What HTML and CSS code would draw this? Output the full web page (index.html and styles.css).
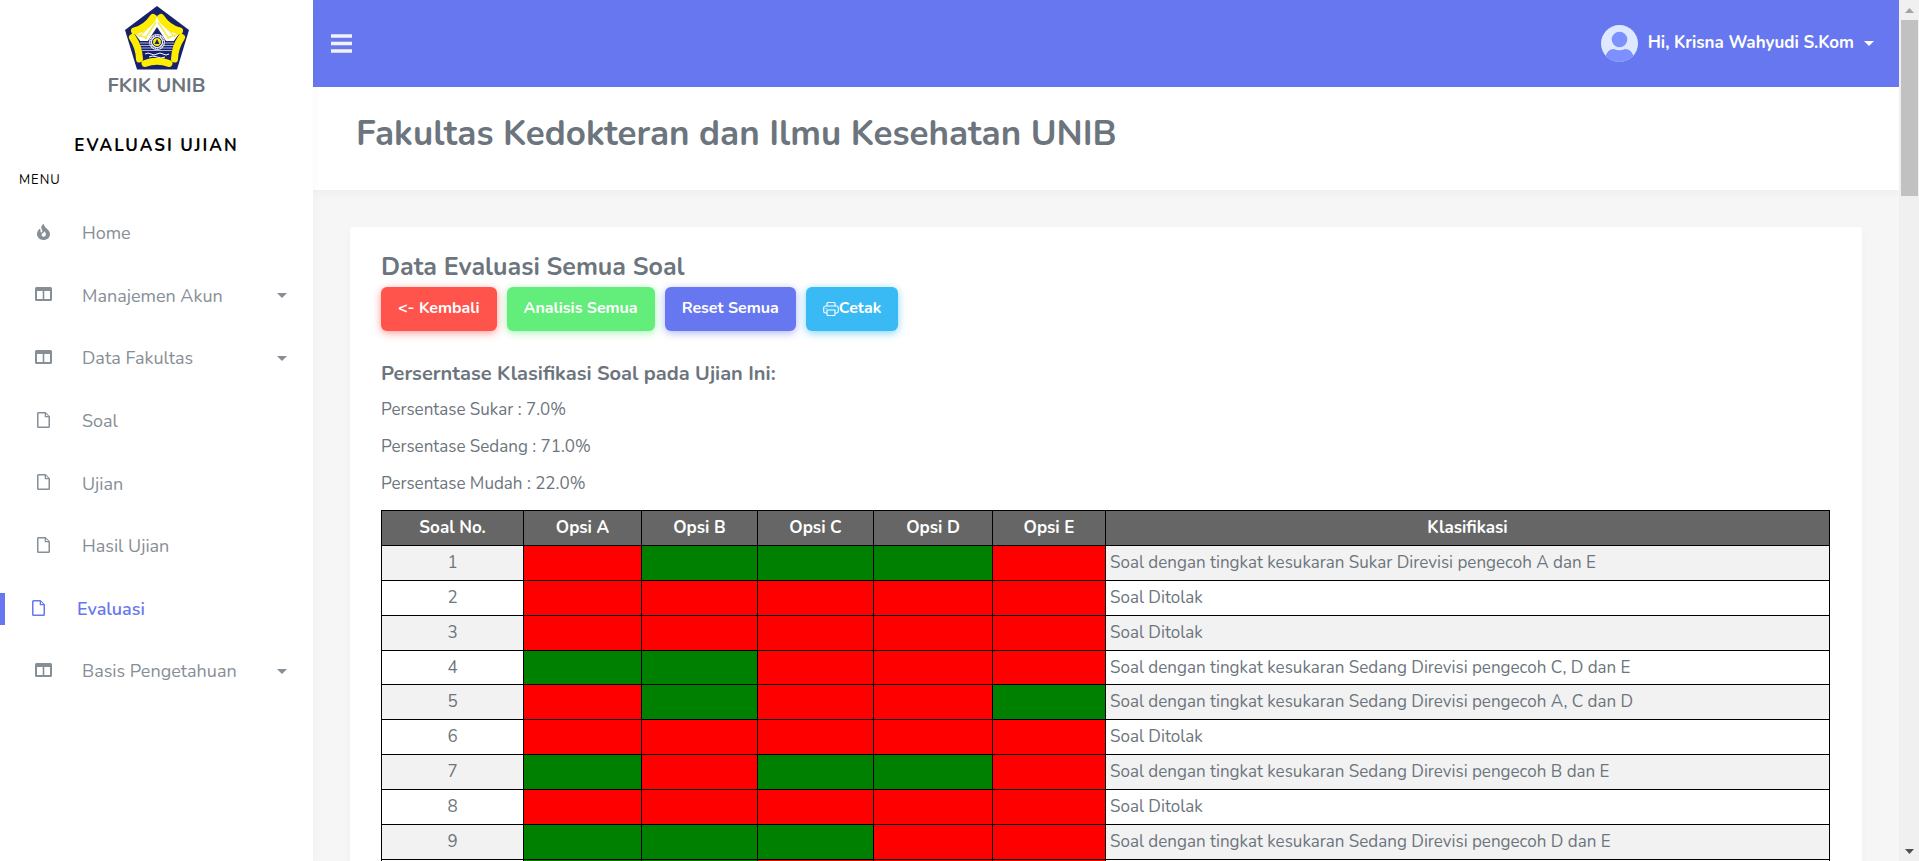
FILE: index.html
```html
<!DOCTYPE html>
<html lang="id">
<head>
<meta charset="utf-8">
<title>Evaluasi Ujian</title>
<link rel="stylesheet" href="styles.css">
</head>
<body>
<svg class="sprite" aria-hidden="true">
  <symbol id="i-fire" viewBox="0 0 13 16"><path d="M6.8 0C6.9 1.8 8 2.9 9.3 4.300C11.300 6.200 13 7.500 13 10.200C13 13.500 10.200 16 6.500 16S0 13.500 0 10.100C0 8.200 .9 6.500 2 5.300C2.600 4.700 3.500 5 3.500 5.900V7.500C3.500 8.600 5 8.800 5.300 7.800C5.800 6.200 4.300 5.300 4.300 3.500C4.300 1.800 5.400 .6 6.800 0ZM7.600 7.200C7.200 8.500 5.500 8.700 4.800 9.900C4.200 11.200 5 12.700 6.500 12.800C8 12.800 9 11.700 8.900 10.300C8.900 9.200 8.200 8.300 7.600 7.200Z" fill="currentColor" fill-rule="evenodd"/></symbol>
  <symbol id="i-columns" viewBox="0 0 17 14"><path d="M1.500 0H15.500Q17 0 17 1.500V12.500Q17 14 15.500 14H1.500Q0 14 0 12.500V1.500Q0 0 1.500 0ZM2 4V12H7.700V4ZM9.300 4V12H15V4Z" fill="currentColor" fill-rule="evenodd"/></symbol>
  <symbol id="i-file" viewBox="0 0 13 16"><path d="M1.500 0H8.500L13 4.500V14.500Q13 16 11.500 16H1.500Q0 16 0 14.500V1.500Q0 0 1.500 0ZM1.500 1.500V14.500H11.500V5.300H7.700V1.500ZM9 1.900V4.100H11.200Z" fill="currentColor" fill-rule="evenodd"/></symbol>
</svg>
<div class="app">
  <aside class="sidebar">
    <a class="brand" href="#">
      <svg class="brand-logo" viewBox="0 0 64 64" aria-hidden="true">
        <path d="M32 0L64 24L52 63.500H12L0 24Z" fill="#17206b"/>
        <path d="M10 28Q27 24 32 9Q37 24 54 28L48 36H16Z" fill="#fff"/>
        <path d="M30 14L14 31M31 16L20 33M34 14L50 31M33 16L44 33M11 28L22 32M53 28L42 32" stroke="#f7ea4a" stroke-width="1.500"/>
        <path d="M32 21L43 38H21Z" fill="#17206b"/>
        <path d="M14 35H50L46 53H18Z" fill="#17206b"/>
        <path d="M15 37H49M15 39.500H49M16 42H48M17 44.500H47" stroke="#a9b2da" stroke-width="1"/>
        <path d="M20 48Q23 46 26 48T32 48T38 48T44 48M24 51Q28 49 32 51T40 51" fill="none" stroke="#fff" stroke-width="1"/>
        <circle cx="32" cy="36" r="8" fill="#e7e9f5"/>
        <circle cx="32" cy="36" r="6.600" fill="none" stroke="#17206b" stroke-width="1" stroke-dasharray="1.500 1"/>
        <circle cx="32" cy="36" r="4.500" fill="#ffe900" stroke="#17206b"/>
        <path d="M32 33L34.500 38H29.500Z" fill="#17206b"/>
        <g fill="none" stroke="#ffed00" stroke-width="7" stroke-linecap="round">
          <path d="M9.500 25Q21 22 28 11.500"/>
          <path d="M54.500 25Q43 22 36 11.500"/>
          <path d="M7.500 31.500Q14 41 14.500 53"/>
          <path d="M56.500 31.500Q50 41 49.500 53"/>
          <path d="M20 57.500Q32 53 44 57.500"/>
        </g>
      </svg>
      <span>FKIK UNIB</span>
    </a>
    <div class="app-name">EVALUASI UJIAN</div>
    <div class="menu-label">MENU</div>
    <nav>
      <ul class="menu">
        <li><a href="#"><svg class="icon icon-tall"><use href="#i-fire"/></svg><span>Home</span></a></li>
        <li><a class="has-sub" href="#"><svg class="icon icon-wide"><use href="#i-columns"/></svg><span>Manajemen Akun</span></a></li>
        <li><a class="has-sub" href="#"><svg class="icon icon-wide"><use href="#i-columns"/></svg><span>Data Fakultas</span></a></li>
        <li><a href="#"><svg class="icon icon-tall"><use href="#i-file"/></svg><span>Soal</span></a></li>
        <li><a href="#"><svg class="icon icon-tall"><use href="#i-file"/></svg><span>Ujian</span></a></li>
        <li><a href="#"><svg class="icon icon-tall"><use href="#i-file"/></svg><span>Hasil Ujian</span></a></li>
        <li class="active"><a href="#"><svg class="icon icon-tall"><use href="#i-file"/></svg><span>Evaluasi</span></a></li>
        <li><a class="has-sub" href="#"><svg class="icon icon-wide"><use href="#i-columns"/></svg><span>Basis Pengetahuan</span></a></li>
      </ul>
    </nav>
  </aside>

  <main class="main">
    <header class="navbar">
      <button class="toggle" type="button" aria-label="Menu"><svg viewBox="0 0 21 19"><path d="M0 2H21M0 9.500H21M0 17H21" stroke="currentColor" stroke-width="3.500"/></svg></button>
      <button class="user" type="button">
        <svg class="avatar" viewBox="0 0 37 37" aria-hidden="true">
          <clipPath id="round"><circle cx="18.500" cy="18.500" r="18.500"/></clipPath>
          <g clip-path="url(#round)"><rect width="37" height="37" fill="#dee9ff"/><circle cx="18.500" cy="14.500" r="7.800" fill="#7c90ff"/><path d="M4 37V33Q6 24 13 24Q18.500 26.500 24 24Q31 24 33 33V37Z" fill="#7c90ff"/></g>
        </svg>
        <span>Hi, Krisna Wahyudi S.Kom</span>
      </button>
    </header>
    <section class="page-head"><h1>Fakultas Kedokteran dan Ilmu Kesehatan UNIB</h1></section>
    <section class="card">
      <h2>Data Evaluasi Semua Soal</h2>
      <div class="actions">
        <a class="btn btn-danger" href="#">&lt;- Kembali</a>
        <a class="btn btn-success" href="#">Analisis Semua</a>
        <a class="btn btn-primary" href="#">Reset Semua</a>
        <a class="btn btn-info" href="#"><svg viewBox="0 0 16 16" aria-hidden="true"><path d="M4 5V2.500Q4 1.500 5 1.500H11Q12 1.500 12 2.500V5M4 12H2.500Q.7 12 .7 10.300V7Q.7 5 2.500 5H13.500Q15.300 5 15.300 7V10.300Q15.300 12 13.500 12H12M4 9H12V13.500Q12 14.500 11 14.500H5Q4 14.500 4 13.500ZM2.500 7.500H3.500" fill="none" stroke="currentColor" stroke-width="1.100"/></svg>Cetak</a>
      </div>
      <h3>Perserntase Klasifikasi Soal pada Ujian Ini:</h3>
      <p>Persentase Sukar : 7.0%</p>
      <p>Persentase Sedang : 71.0%</p>
      <p>Persentase Mudah : 22.0%</p>
      <table>
        <colgroup><col class="c-no"><col class="c-a"><col class="c-b"><col class="c-b"><col class="c-d"><col class="c-e"><col></colgroup>
        <thead><tr><th>Soal No.</th><th>Opsi A</th><th>Opsi B</th><th>Opsi C</th><th>Opsi D</th><th>Opsi E</th><th>Klasifikasi</th></tr></thead>
        <tbody>
          <tr><td>1</td><td class="bad"></td><td class="ok"></td><td class="ok"></td><td class="ok"></td><td class="bad"></td><td>Soal dengan tingkat kesukaran Sukar Direvisi pengecoh A dan E</td></tr>
          <tr><td>2</td><td class="bad"></td><td class="bad"></td><td class="bad"></td><td class="bad"></td><td class="bad"></td><td>Soal Ditolak</td></tr>
          <tr><td>3</td><td class="bad"></td><td class="bad"></td><td class="bad"></td><td class="bad"></td><td class="bad"></td><td>Soal Ditolak</td></tr>
          <tr><td>4</td><td class="ok"></td><td class="ok"></td><td class="bad"></td><td class="bad"></td><td class="bad"></td><td>Soal dengan tingkat kesukaran Sedang Direvisi pengecoh C, D dan E</td></tr>
          <tr><td>5</td><td class="bad"></td><td class="ok"></td><td class="bad"></td><td class="bad"></td><td class="ok"></td><td>Soal dengan tingkat kesukaran Sedang Direvisi pengecoh A, C dan D</td></tr>
          <tr><td>6</td><td class="bad"></td><td class="bad"></td><td class="bad"></td><td class="bad"></td><td class="bad"></td><td>Soal Ditolak</td></tr>
          <tr><td>7</td><td class="ok"></td><td class="bad"></td><td class="ok"></td><td class="ok"></td><td class="bad"></td><td>Soal dengan tingkat kesukaran Sedang Direvisi pengecoh B dan E</td></tr>
          <tr><td>8</td><td class="bad"></td><td class="bad"></td><td class="bad"></td><td class="bad"></td><td class="bad"></td><td>Soal Ditolak</td></tr>
          <tr><td>9</td><td class="ok"></td><td class="ok"></td><td class="ok"></td><td class="bad"></td><td class="bad"></td><td>Soal dengan tingkat kesukaran Sedang Direvisi pengecoh D dan E</td></tr>
          <tr><td></td><td class="ok"></td><td class="ok"></td><td class="bad"></td><td class="bad"></td><td class="bad"></td><td></td></tr>
        </tbody>
      </table>
    </section>
  </main>

  <div class="scrollbar" aria-hidden="true">
    <svg viewBox="0 0 20 20"><path d="M6 13H15L10.500 8Z" fill="#a3a3a3"/></svg>
    <div class="thumb"></div>
    <svg class="down" viewBox="0 0 20 20"><path d="M6 8H15L10.500 13Z" fill="#505050"/></svg>
  </div>
</div>
</body>
</html>
```
FILE: styles.css
```css
* { box-sizing: border-box; }
body {
  margin: 0;
  font: 400 17px/1.7 Nunito, Lato, "Open Sans", sans-serif;
  color: #6c757d;
  background: #f6f6f6;
}
h1, h2, h3, p, ul { margin: 0; padding: 0; }
a { color: inherit; text-decoration: none; }
button { font: inherit; color: inherit; background: none; border: 0; padding: 0; }
.sprite { position: absolute; width: 0; height: 0; }

.app {
  display: grid;
  grid-template-columns: 313px 1fr 20px;
  height: 100vh;
  overflow: hidden;
}

.sidebar { background: #fff; box-shadow: 0 4px 10px rgba(0, 0, 0, .03); z-index: 1; }
.brand {
  display: flex;
  flex-direction: column;
  align-items: center;
  padding-top: 6px;
  font-size: 20px;
  line-height: 32px;
  font-weight: 700;
}
.brand-logo { width: 64px; height: 64px; }
.app-name {
  margin-top: 27px;
  text-align: center;
  font-size: 17px;
  line-height: 34px;
  font-weight: 700;
  letter-spacing: 2px;
  color: #000;
}
.menu-label {
  padding: 8px 19px;
  font-size: 13px;
  line-height: 18px;
  letter-spacing: 1px;
  color: #000;
}
.menu {
  display: grid;
  grid-auto-rows: 1fr;
  min-height: 506px;
  padding-top: 5px;
  list-style: none;
  color: #868e96;
  font-size: 18px;
}
.menu li { display: flex; align-items: center; }
.menu a {
  display: flex;
  align-items: center;
  flex: 1;
  height: 32px;
  padding: 0 26px 0 34px;
}
.icon { width: 19px; margin: 0 29px 3px 0; flex: none; }
.icon-wide { height: 14px; }
.icon-tall { height: 16px; }
.has-sub::after {
  content: "";
  margin-left: auto;
  border: 5px solid transparent;
  border-top-color: currentColor;
  border-bottom: 0;
}
.active a { border-left: 5px solid #6777ef; padding-left: 24px; color: #6777ef; font-weight: 600; }

.main { min-width: 0; overflow: hidden; }
.navbar {
  display: flex;
  align-items: center;
  justify-content: space-between;
  height: 87px;
  padding: 0 25px 0 18px;
  background: #6777ef;
  color: #fff;
}
.toggle { color: #f2f2f2; display: flex; }
.toggle svg { width: 21px; height: 19px; }
.user { display: flex; align-items: center; gap: 10px; font-weight: 700; }
.avatar { width: 37px; height: 37px; }
.user::after { content: ""; border: 5px solid transparent; border-top-color: #fff; border-bottom: 0; }

.page-head {
  padding: 23px 43px 32px;
  background: #fff;
  box-shadow: 0 4px 8px rgba(0, 0, 0, .03);
}
h1 { font-size: 35px; line-height: 48px; font-weight: 700; }
.card {
  margin: 37px;
  padding: 24px 32px 32px 31px;
  background: #fff;
  border-radius: 4px;
  box-shadow: 0 4px 8px rgba(0, 0, 0, .03);
}
h2 { font-size: 25px; line-height: 32px; font-weight: 700; }
.actions { display: flex; gap: 10px; margin: 4px 0 27px; }
.btn {
  display: flex;
  align-items: center;
  height: 44px;
  padding: 0 17px;
  border-radius: 6px;
  color: #fff;
  font-size: 16px;
  font-weight: 700;
}
.btn svg { width: 16px; height: 16px; }
.btn-danger { background: #fe544b; box-shadow: 0 2px 8px #fd9b96; }
.btn-success { background: #63ed7a; box-shadow: 0 2px 8px #a8f5b4; }
.btn-primary { background: #6777ef; box-shadow: 0 2px 8px #acb5f6; }
.btn-info { background: #3abaf4; box-shadow: 0 2px 8px #82d3f8; }
h3 { font-size: 20px; line-height: 32px; font-weight: 700; margin-bottom: 4px; }
p { line-height: 31px; margin-bottom: 6px; }

table { width: 100%; margin-top: 11px; border-collapse: collapse; table-layout: fixed; }
th, td { border: 1px solid #000; padding: 3px 4px 2px; }
th { background: #666; color: #fff; font-weight: 700; }
td:first-child { text-align: center; }
tbody tr { height: 34px; }
tbody tr:nth-child(odd) { background: #f2f2f2; }
.bad { background: red; }
.ok { background: green; }
.c-no { width: 142px; }
.c-a { width: 118px; }
.c-b { width: 116px; }
.c-d { width: 119px; }
.c-e { width: 113px; }

.scrollbar { display: flex; flex-direction: column; background: #f0f0f0; }
.scrollbar svg { width: 20px; height: 20px; }
.thumb { height: 176px; margin: 0 1px 0 2px; background: #c1c1c1; }
.down { margin-top: auto; }
```
